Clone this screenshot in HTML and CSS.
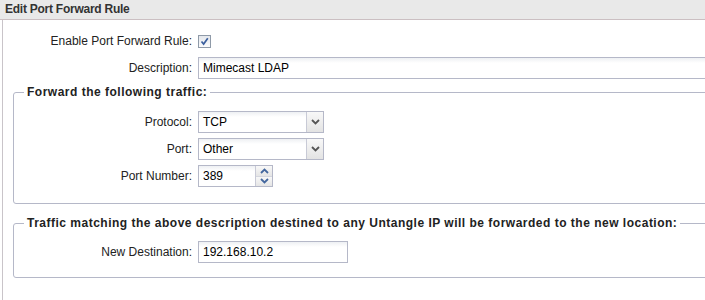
FILE: index.html
```html
<!DOCTYPE html>
<html lang="en">
<head>
    <meta charset="UTF-8">
    <title>Edit Port Forward Rule</title>
    <link rel="stylesheet" href="styles.css">
</head>
<body>
    <div class="panel">
        <div class="panel-header">Edit Port Forward Rule</div>
        <div class="panel-body">
            <div class="row">
                <label class="field-label">Enable Port Forward Rule:</label>
                <span class="checkbox">
                    <svg width="11" height="11" viewBox="0 0 11 11"><path d="M2.5 5.5 L4.6 8 L8.8 2.2" fill="none" stroke="#3b5f9e" stroke-width="1.7"/></svg>
                </span>
            </div>
            <div class="row">
                <label class="field-label">Description:</label>
                <div class="text-field wide">Mimecast LDAP</div>
            </div>

            <fieldset class="group">
                <legend>Forward the following traffic:</legend>
                <div class="row">
                    <label class="field-label inner">Protocol:</label>
                    <div class="combo">
                        <div class="combo-text">TCP</div>
                        <div class="trigger">
                            <svg width="9" height="6" viewBox="0 0 9 6"><path d="M1 1 L4.5 4.5 L8 1" fill="none" stroke="#555" stroke-width="1.8"/></svg>
                        </div>
                    </div>
                </div>
                <div class="row">
                    <label class="field-label inner">Port:</label>
                    <div class="combo">
                        <div class="combo-text">Other</div>
                        <div class="trigger">
                            <svg width="9" height="6" viewBox="0 0 9 6"><path d="M1 1 L4.5 4.5 L8 1" fill="none" stroke="#555" stroke-width="1.8"/></svg>
                        </div>
                    </div>
                </div>
                <div class="row">
                    <label class="field-label inner">Port Number:</label>
                    <div class="combo spinner">
                        <div class="combo-text">389</div>
                        <div class="spin">
                            <div class="spin-half">
                                <svg width="9" height="6" viewBox="0 0 9 6"><path d="M1 5 L4.5 1.5 L8 5" fill="none" stroke="#44679e" stroke-width="1.8"/></svg>
                            </div>
                            <div class="spin-half">
                                <svg width="9" height="6" viewBox="0 0 9 6"><path d="M1 1 L4.5 4.5 L8 1" fill="none" stroke="#44679e" stroke-width="1.8"/></svg>
                            </div>
                        </div>
                    </div>
                </div>
            </fieldset>

            <fieldset class="group second">
                <legend>Traffic matching the above description destined to any Untangle IP will be forwarded to the new location:</legend>
                <div class="row">
                    <label class="field-label inner">New Destination:</label>
                    <div class="text-field dest">192.168.10.2</div>
                </div>
            </fieldset>
        </div>
    </div>
</body>
</html>
```

FILE: styles.css
```css
body {
    margin: 0;
    font-family: "Liberation Sans", Arial, sans-serif;
    font-size: 12px;
    color: #222;
    background: #fff;
    overflow: hidden;
}
.panel {
    width: 760px;
}
.panel-header {
    height: 19px;
    line-height: 19px;
    padding-left: 5px;
    background: #e9e9e9;
    border-bottom: 1px solid #cbbfc2;
    font-weight: bold;
    letter-spacing: -0.25px;
    color: #333;
}
.panel-body {
    margin-left: 2px;
    border-left: 1px solid #c9c4c9;
    padding: 10px 0 30px 10px;
}
.row {
    display: flex;
    align-items: center;
    height: 22px;
    margin-bottom: 5px;
}
.field-label {
    width: 179px;
    padding-right: 6px;
    text-align: right;
    color: #222;
}
.field-label.inner {
    width: 168px;
}
.checkbox {
    width: 13px;
    height: 13px;
    box-sizing: border-box;
    border: 1px solid #8f9aa8;
    background: linear-gradient(#e4e7ec, #fbfbfc);
    display: flex;
    align-items: center;
    justify-content: center;
}
.text-field {
    box-sizing: border-box;
    height: 22px;
    line-height: 20px;
    padding-left: 4px;
    border: 1px solid #b5b8c8;
    background: linear-gradient(#eef0f3, #fff 5px);
    color: #000;
}
.wide {
    flex: 1;
}
.dest {
    width: 150px;
}
.group {
    margin: 1px 0 0 0;
    padding: 11px 10px 11px 10px;
    border: 1px solid #b5b8c8;
    border-radius: 3px;
}
.group legend {
    padding: 0 3px;
    line-height: 16px;
    font-weight: bold;
    letter-spacing: 0.5px;
    color: #222;
}
.group.second {
    margin-top: 11px;
    padding-top: 10px;
    padding-bottom: 9px;
}
.combo {
    display: flex;
    box-sizing: border-box;
    width: 126px;
    height: 22px;
    border: 1px solid #b5b8c8;
}
.combo.spinner {
    width: 75px;
}
.combo-text {
    flex: 1;
    line-height: 20px;
    padding-left: 4px;
    color: #000;
    background: linear-gradient(#eef0f3, #fff 5px);
}
.trigger {
    width: 16px;
    border-left: 1px solid #c8cad6;
    background: linear-gradient(#f8f8f8, #e3e3e3);
    display: flex;
    align-items: center;
    justify-content: center;
}
.spin {
    width: 16px;
    border-left: 1px solid #c8cad6;
    display: flex;
    flex-direction: column;
}
.spin-half {
    flex: 1;
    display: flex;
    align-items: center;
    justify-content: center;
    background: linear-gradient(#f8f8f8, #e5e5e5);
}
.spin-half + .spin-half {
    border-top: 1px solid #d4d6de;
}
```
